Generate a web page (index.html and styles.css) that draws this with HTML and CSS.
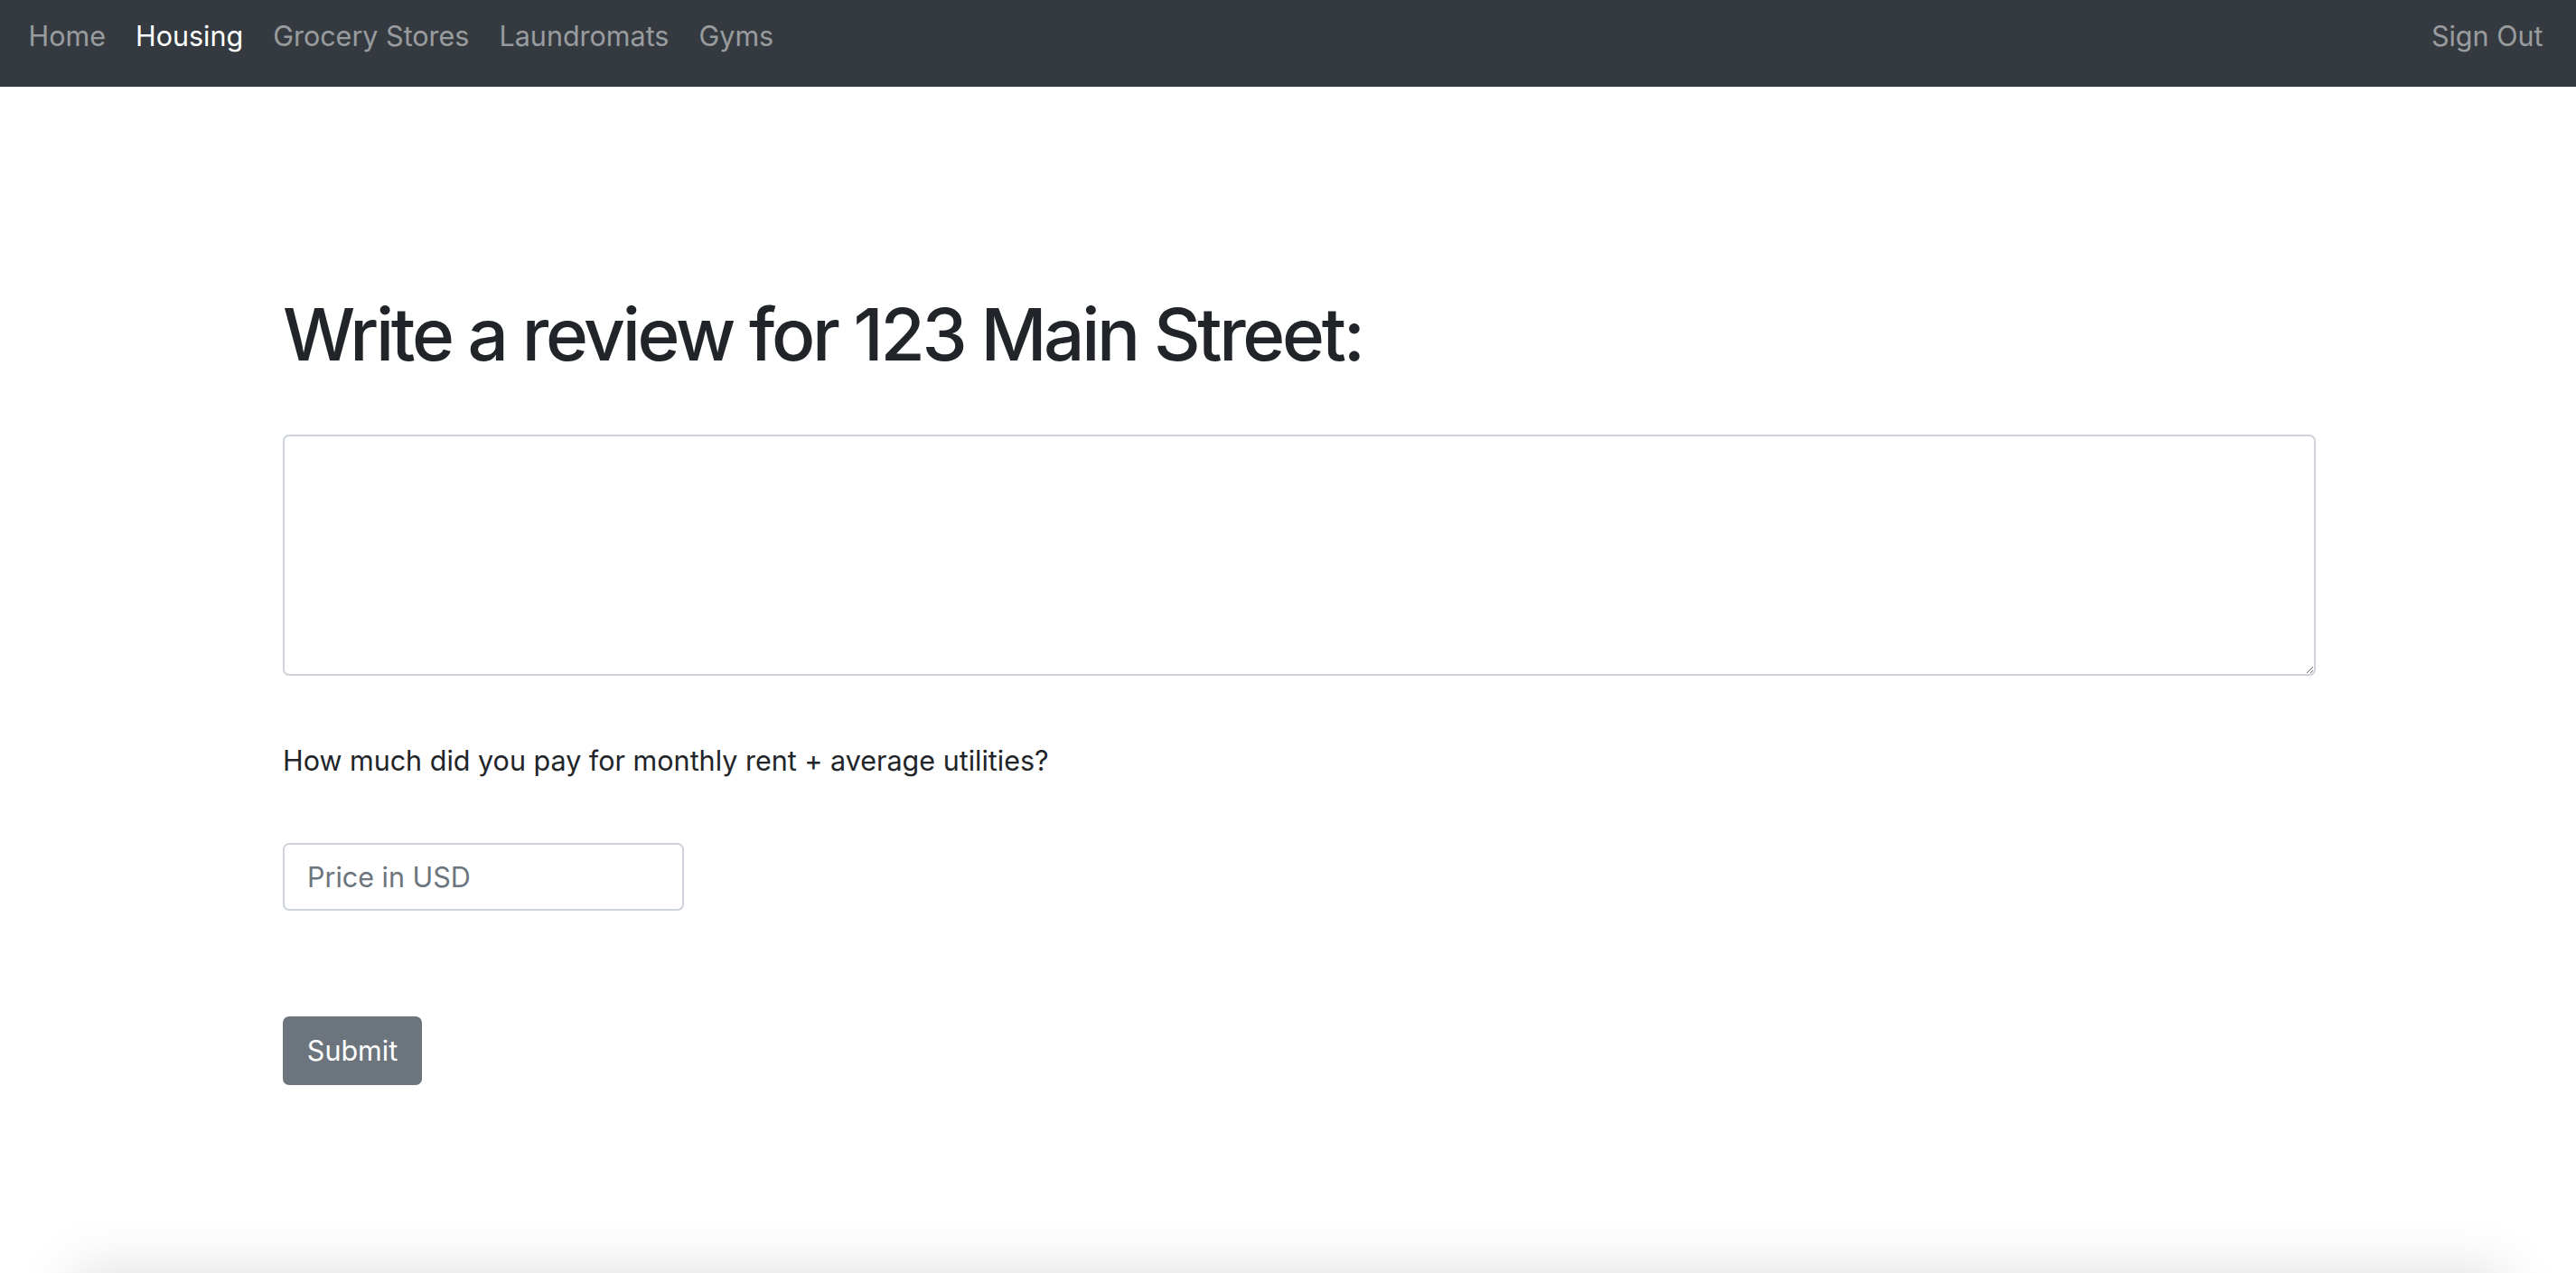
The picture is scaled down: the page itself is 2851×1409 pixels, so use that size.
FILE: index.html
```html
<!DOCTYPE html>
<html lang="en">
<head>
<meta charset="utf-8">
<title>Write a review</title>
<link rel="stylesheet" href="styles.css">
</head>
<body>
<div class="page">
  <nav class="navbar">
    <ul class="nav-list">
      <li><a class="nav-link" href="#">Home</a></li>
      <li><a class="nav-link active" href="#">Housing</a></li>
      <li><a class="nav-link" href="#">Grocery Stores</a></li>
      <li><a class="nav-link" href="#">Laundromats</a></li>
      <li><a class="nav-link" href="#">Gyms</a></li>
    </ul>
    <a class="nav-link" href="#">Sign Out</a>
  </nav>
  <main class="content">
    <h1 class="title">Write a review for 123 Main Street:</h1>
    <form class="review-form">
      <textarea class="review-text"></textarea>
      <p class="question">How much did you pay for monthly rent + average utilities?</p>
      <input class="price" type="text" placeholder="Price in USD">
      <button class="submit" type="button">Submit</button>
    </form>
  </main>
</div>
<footer class="footer"></footer>
</body>
</html>
```

FILE: styles.css
```css
html {
  overflow: hidden;
}
body {
  margin: 0;
  background: #fff;
  color: #212529;
  font-family: Inter, "Noto Sans", "Liberation Sans", sans-serif;
  font-size: 30.5px;
  line-height: 1.5;
}
.page {
  min-height: 100vh;
}
.navbar {
  background: #343a40;
  height: 96px;
  box-sizing: border-box;
  padding: 16px 20px 0 15px;
  display: flex;
  justify-content: space-between;
  align-items: flex-start;
}
.nav-list {
  list-style: none;
  margin: 0;
  padding: 0;
  display: flex;
}
.nav-link {
  display: block;
  padding: 0 16.5px;
  font-size: 30.5px;
  line-height: 48px;
  color: rgba(255, 255, 255, 0.5);
  text-decoration: none;
}
.nav-link.active {
  color: #fff;
}
.content {
  width: 2250px;
  margin-left: 313px;
  padding-top: 226px;
}
.title {
  margin: 0;
  font-size: 80px;
  font-weight: 500;
  letter-spacing: -3.3px;
  line-height: 96px;
  color: #212529;
}
.review-form {
  display: flex;
  flex-direction: column;
  align-items: flex-start;
  margin-top: 63px;
}
.review-text {
  box-sizing: border-box;
  width: 2250px;
  height: 267px;
  border: 2px solid #ced4da;
  border-radius: 7px;
  font: inherit;
  padding: 12px 25px;
  resize: vertical;
  margin: 0;
}
.question {
  margin: 72px 0 0 0;
  line-height: 43px;
}
.price {
  box-sizing: border-box;
  margin-top: 70px;
  width: 444px;
  height: 75px;
  border: 2px solid #ced4da;
  border-radius: 7px;
  padding: 0 25px;
  font: inherit;
  color: #495057;
}
.price::placeholder {
  color: #6c757d;
}
.submit {
  box-sizing: border-box;
  margin-top: 117px;
  width: 154px;
  height: 76px;
  border: 2px solid #6c757d;
  border-radius: 7px;
  background: #6c757d;
  color: #fff;
  font: inherit;
  padding: 0;
}
.footer {
  height: 200px;
  margin: 0 80px;
  background: #fff;
  box-shadow: 0 0 60px rgba(0, 0, 0, 0.14);
}
```
